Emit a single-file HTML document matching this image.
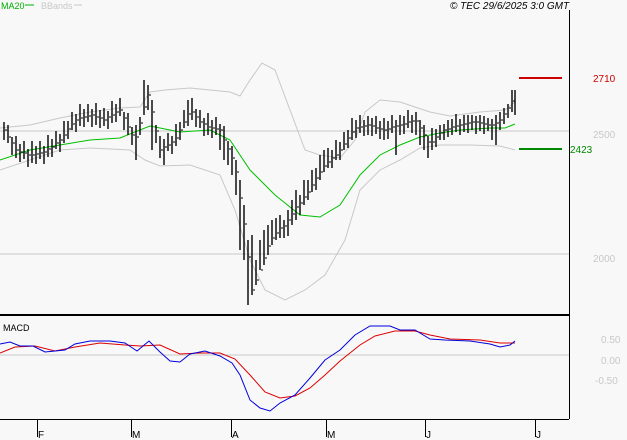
<!DOCTYPE html>
<html><head><meta charset="utf-8"><style>
html,body{margin:0;padding:0;background:#f8f8f8;}
svg{display:block;font-family:"Liberation Sans",sans-serif;}
</style></head><body>
<svg width="627" height="440" viewBox="0 0 627 440" xmlns="http://www.w3.org/2000/svg">
<rect width="627" height="440" fill="#f8f8f8"/>
<text x="1" y="9" font-size="9" fill="#00b000">MA20</text>
<line x1="25" y1="5" x2="34" y2="5" stroke="#00b000"/>
<text x="41" y="9" font-size="9" fill="#c8c8c8">BBands</text>
<line x1="74" y1="5" x2="82" y2="5" stroke="#c8c8c8"/>
<text x="450" y="9" font-size="10" font-style="italic" fill="#000">© TEC 29/6/2025 3:0 GMT</text>
<line x1="0" y1="131" x2="569" y2="131" stroke="#c8c8c8"/>
<line x1="0" y1="254" x2="569" y2="254" stroke="#c8c8c8"/>
<line x1="0" y1="355" x2="569" y2="355" stroke="#c8c8c8"/>
<text x="593" y="138" font-size="10" fill="#c8c8c8">2500</text>
<text x="593" y="262" font-size="10" fill="#c8c8c8">2000</text>
<text x="593" y="82" font-size="10" fill="#cc0000">2710</text>
<text x="570" y="153" font-size="10" fill="#008800">2423</text>
<line x1="519" y1="78" x2="562" y2="78" stroke="#cc0000" stroke-width="2"/>
<line x1="519" y1="149" x2="562" y2="149" stroke="#008800" stroke-width="2"/>
<text x="601" y="343" font-size="10" fill="#c8c8c8">0.50</text>
<text x="601" y="364" font-size="10" fill="#c8c8c8">0.00</text>
<text x="595" y="384" font-size="10" fill="#c8c8c8">-0.50</text>
<text x="3" y="331" font-size="9" fill="#000">MACD</text>

<polyline fill="none" stroke="#c8c8c8" stroke-width="1" points="0,128 30,125 60,118 90,112 120,108 140,107 150,92 165,90 190,88 230,92 240,96 250,80 262,63 275,70 290,110 305,150 320,155 340,158 355,140 365,112 380,100 400,102 430,112 450,116 480,112 505,110 515,102"/>
<polyline fill="none" stroke="#c8c8c8" stroke-width="1" points="0,170 30,160 60,150 90,148 130,150 145,160 160,166 190,165 220,175 235,210 250,260 265,290 285,300 305,290 325,275 345,240 360,190 380,170 400,160 420,148 440,145 470,145 500,146 515,150"/>
<polyline fill="none" stroke="#00c000" stroke-width="1" points="0,160 30,150 60,145 90,140 120,138 150,126 180,132 210,130 230,140 250,170 275,195 300,215 320,217 340,205 360,175 380,155 400,145 420,137 440,133 460,130 490,128 505,128 515,124"/>

<path fill="none" stroke="#000" stroke-width="1.4" d="M4 122V140M8 125V143M12 137V155M16 136V158M20 144V162M24 141V159M28 149V167M32 141V163M36 146V164M40 141V159M44 146V164M48 135V157M52 139V157M56 131V149M60 134V152M64 121V143M68 121V139M72 112V130M76 114V132M80 104V126M84 109V127M88 104V122M92 109V127M96 103V125M100 110V128M104 108V126M108 111V129M112 101V123M116 104V122M120 98V116M124 112V130M128 113V135M132 127V145M136 125V160M140 117V135M144 80V115M148 85V110M152 100V150M156 125V143M160 136V158M164 139V165M168 133V151M172 136V154M176 124V146M180 122V140M184 110V128M188 100V126M192 98V120M196 109V127M200 110V128M204 118V136M208 113V135M212 120V138M216 117V135M220 124V150M224 126V160M228 141V165M232 146V175M236 160V195M240 180V250M244 205V260M248 240V305M252 235V295M256 260V285M260 240V270M264 230V265M268 225V255M272 220V245M276 218V240M280 215V238M284 220V238M288 210V236M292 200V225M296 190V220M300 195V215M304 180V205M308 180V200M312 170V192M316 168V190M320 155V180M324 150V172M328 148V168M332 150V168M336 140V160M340 142V160M344 132V150M348 130V148M352 118V140M356 120V138M360 115V133M364 120V136M368 116V135M372 118V136M376 116V134M380 121V139M384 118V140M388 121V139M392 115V133M396 120V155M400 115V135M404 116V134M408 110V128M412 115V133M416 112V135M420 120V145M424 125V150M428 136V158M432 128V150M436 129V147M440 125V140M444 124V140M448 120V137M452 119V135M456 114V132M460 119V135M464 115V132M468 115V133M472 115V130M476 116V134M480 115V131M484 116V134M488 118V131M492 119V140M496 115V145M500 112V130M504 108V124M508 104V118M512 90V112M515 90V115"/>
<path fill="none" stroke="#000" stroke-width="1" d="M5 130H7M9 137H11M13 143H15M17 150H19M21 152H23M25 153H27M29 155H31M33 155H35M37 154H39M41 153H43M45 152H47M49 149H51M53 147H55M57 143H59M61 140H63M65 135H67M69 129H71M73 124H75M77 120H79M81 118H83M85 117H87M89 116H91M93 115H95M97 117H99M101 118H103M105 120H107M109 117H111M113 115H115M117 112H119M121 110H123M125 118H127M129 127H131M133 135H135M137 137H139M141 123H143M145 107H147M149 95H151M153 112H155M157 131H159M161 150H163M165 147H167M169 145H171M173 142H175M177 138H179M181 130H183M185 122H187M189 114H191M193 112H195M197 117H199M201 122H203M205 124H207M209 127H211M213 128H215M217 129H219M221 130H223M225 140H227M229 149H231M233 158H235M237 172H239M241 198H243M245 224H247M249 257H251M253 290H255M257 280H259M261 270H263M265 258H267M269 246H271M273 238H275M277 233H279M281 228H283M285 226H287M289 220H291M293 214H295M297 207H299M301 203H303M305 197H307M309 192H311M313 185H315M317 178H319M321 172H323M325 166H327M329 162H331M333 158H335M337 155H339M341 150H343M345 144H347M349 138H351M353 132H355M357 128H359M361 127H363M365 126H367M369 125H371M373 126H375M377 128H379M381 129H383M385 130H387M389 129H391M393 127H395M397 126H399M401 125H403M405 124H407M409 122H411M413 121H415M417 121H419M421 128H423M425 135H427M429 142H431M433 142H435M437 137H439M441 133H443M445 130H447M449 129H451M453 127H455M457 126H459M461 125H463M465 124H467M469 123H471M473 122H475M477 122H479M481 123H483M485 124H487M489 125H491M493 125H495M497 123H499M501 120H503M505 114H507M509 108H511M513 101H515"/>

<polyline fill="none" stroke="#dd0000" stroke-width="1" points="0,353 15,347 35,346 55,351 75,347 100,343 125,345 140,346 160,345 180,354 200,353 220,353 235,359 250,375 265,392 280,398 295,396 310,388 325,375 340,361 360,345 375,336 395,331 415,331 430,335 450,339 480,340 500,343 515,343"/>
<polyline fill="none" stroke="#0000dd" stroke-width="1" points="0,344 10,342 20,346 33,346 45,352 65,350 75,344 90,341 110,341 125,343 137,351 149,341 160,352 170,361 180,362 190,354 205,351 220,356 232,363 240,375 250,400 260,408 270,411 280,403 295,395 310,378 325,360 340,350 355,335 370,326 390,326 400,330 415,330 430,339 445,340 470,341 490,344 500,347 510,345 515,341"/>

<line x1="569.5" y1="10" x2="569.5" y2="419" stroke="#000"/>
<line x1="0" y1="315" x2="569" y2="315" stroke="#000" stroke-width="2"/>
<line x1="0" y1="419.5" x2="569" y2="419.5" stroke="#000"/>
<g stroke="#000">
<line x1="37.5" y1="420" x2="37.5" y2="437"/><line x1="131.5" y1="420" x2="131.5" y2="437"/>
<line x1="231.5" y1="420" x2="231.5" y2="437"/><line x1="326.5" y1="420" x2="326.5" y2="437"/>
<line x1="425.5" y1="420" x2="425.5" y2="437"/><line x1="535.5" y1="420" x2="535.5" y2="437"/>
</g>
<g font-size="10" fill="#000">
<text x="38" y="438">F</text><text x="132" y="438">M</text><text x="232" y="438">A</text>
<text x="327" y="438">M</text><text x="426" y="438">J</text><text x="536" y="438">J</text>
</g>
</svg>
</body></html>
